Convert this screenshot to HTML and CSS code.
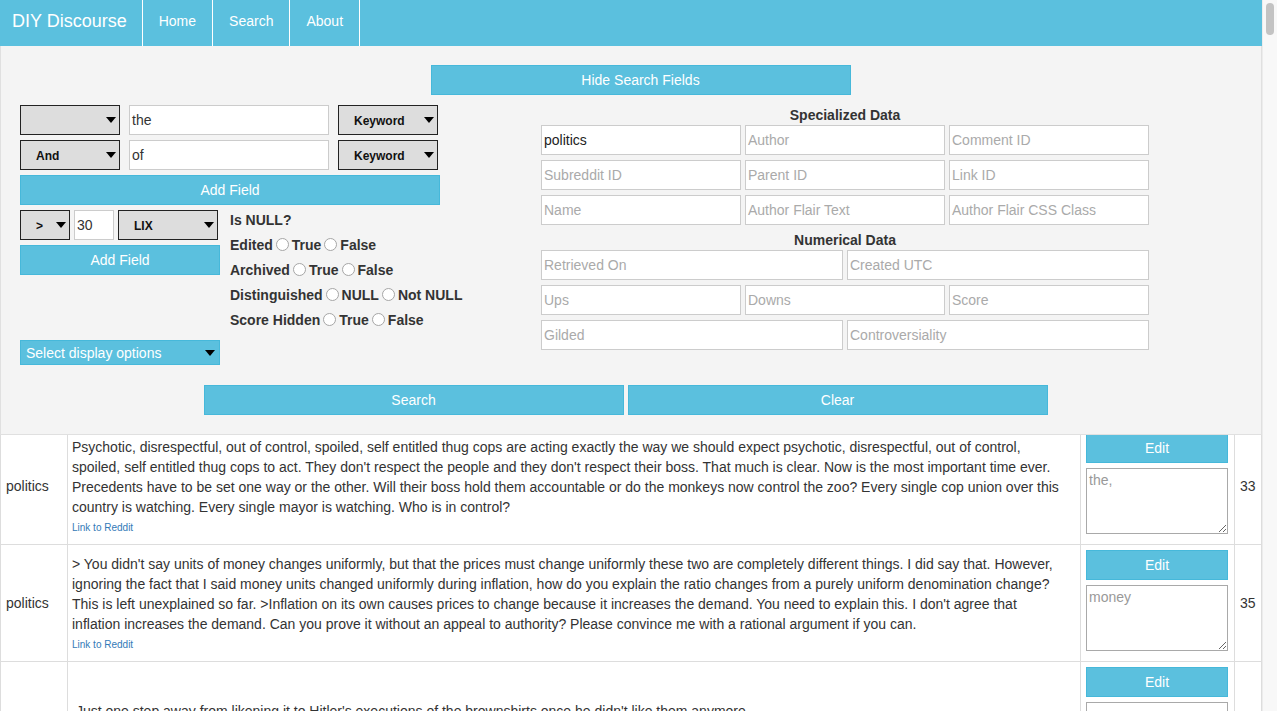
FILE: index.html
```html
<!DOCTYPE html>
<html lang="en">
<head>
<meta charset="utf-8">
<title>DIY Discourse</title>
<link rel="stylesheet" href="styles.css">
</head>
<body>
<div class="page">
  <nav class="navbar">
    <a class="brand" href="#">DIY Discourse</a>
    <a class="nav-link" href="#">Home</a>
    <a class="nav-link" href="#">Search</a>
    <a class="nav-link nav-last" href="#">About</a>
  </nav>

  <section class="panel">
    <div class="hide-row"><div class="btn btn-hide">Hide Search Fields</div></div>

    <div class="form">
      <div class="left">
        <div class="qrow">
          <div class="select sel-100"><span class="sel-text"></span><span class="arrow"></span></div>
          <div class="input input-200">the</div>
          <div class="select sel-100"><span class="sel-text">Keyword</span><span class="arrow"></span></div>
        </div>
        <div class="qrow">
          <div class="select sel-100"><span class="sel-text">And</span><span class="arrow"></span></div>
          <div class="input input-200">of</div>
          <div class="select sel-100"><span class="sel-text">Keyword</span><span class="arrow"></span></div>
        </div>
        <div class="btn btn-add-wide">Add Field</div>

        <div class="block2">
          <div class="numcol">
            <div class="numrow">
              <div class="select sel-50"><span class="sel-text">&gt;</span><span class="arrow"></span></div>
              <div class="input input-40">30</div>
              <div class="select sel-100"><span class="sel-text">LIX</span><span class="arrow"></span></div>
            </div>
            <div class="btn btn-add">Add Field</div>
          </div>
          <div class="isnull">
            <div class="isnull-title">Is NULL?</div>
            <div class="nrow">Edited<span class="radio"></span>True<span class="radio"></span>False</div>
            <div class="nrow">Archived<span class="radio"></span>True<span class="radio"></span>False</div>
            <div class="nrow">Distinguished<span class="radio"></span>NULL<span class="radio"></span>Not NULL</div>
            <div class="nrow">Score Hidden<span class="radio"></span>True<span class="radio"></span>False</div>
          </div>
        </div>

        <div class="display-select"><span>Select display options</span><span class="arrow"></span></div>
      </div>

      <div class="right">
        <div class="heading">Specialized Data</div>
        <div class="grow">
          <div class="input f3 filled">politics</div>
          <div class="input f3 ph">Author</div>
          <div class="input f3 ph">Comment ID</div>
        </div>
        <div class="grow">
          <div class="input f3 ph">Subreddit ID</div>
          <div class="input f3 ph">Parent ID</div>
          <div class="input f3 ph">Link ID</div>
        </div>
        <div class="grow">
          <div class="input f3 ph">Name</div>
          <div class="input f3 ph">Author Flair Text</div>
          <div class="input f3 ph">Author Flair CSS Class</div>
        </div>
        <div class="heading">Numerical Data</div>
        <div class="grow">
          <div class="input f2 ph">Retrieved On</div>
          <div class="input f2 ph">Created UTC</div>
        </div>
        <div class="grow">
          <div class="input f3 ph">Ups</div>
          <div class="input f3 ph">Downs</div>
          <div class="input f3 ph">Score</div>
        </div>
        <div class="grow">
          <div class="input f2 ph">Gilded</div>
          <div class="input f2 ph">Controversiality</div>
        </div>
      </div>
    </div>

    <div class="action-row">
      <div class="btn btn-action">Search</div>
      <div class="btn btn-action">Clear</div>
    </div>
  </section>

  <div class="results">
    <table>
      <colgroup>
        <col class="c-sub">
        <col class="c-body">
        <col class="c-edit">
        <col class="c-num">
      </colgroup>
      <tr>
        <td class="sub">politics</td>
        <td class="body">Psychotic, disrespectful, out of control, spoiled, self entitled thug cops are acting exactly the way we should expect psychotic, disrespectful, out of control,<br>spoiled, self entitled thug cops to act. They don't respect the people and they don't respect their boss. That much is clear. Now is the most important time ever.<br>Precedents have to be set one way or the other. Will their boss hold them accountable or do the monkeys now control the zoo? Every single cop union over this<br>country is watching. Every single mayor is watching. Who is in control?<a class="reddit" href="#">Link to Reddit</a></td>
        <td class="edit"><div class="btn btn-edit">Edit</div><textarea placeholder="the,"></textarea></td>
        <td class="num">33</td>
      </tr>
      <tr>
        <td class="sub">politics</td>
        <td class="body">&gt; You didn't say units of money changes uniformly, but that the prices must change uniformly these two are completely different things. I did say that. However,<br>ignoring the fact that I said money units changed uniformly during inflation, how do you explain the ratio changes from a purely uniform denomination change?<br>This is left unexplained so far. &gt;Inflation on its own causes prices to change because it increases the demand. You need to explain this. I don't agree that<br>inflation increases the demand. Can you prove it without an appeal to authority? Please convince me with a rational argument if you can.<a class="reddit" href="#">Link to Reddit</a></td>
        <td class="edit"><div class="btn btn-edit">Edit</div><textarea placeholder="money"></textarea></td>
        <td class="num">35</td>
      </tr>
      <tr>
        <td class="sub">politics</td>
        <td class="body">&nbsp;Just one step away from likening it to Hitler's executions of the brownshirts once he didn't like them anymore.<a class="reddit" href="#">Link to Reddit</a></td>
        <td class="edit"><div class="btn btn-edit">Edit</div><textarea placeholder=""></textarea></td>
        <td class="num">12</td>
      </tr>
    </table>
  </div>
</div>
<div class="scrollbar"><div class="thumb"></div></div>
</body>
</html>
```

FILE: styles.css
```css
* { box-sizing: border-box; }

html, body {
  margin: 0;
  height: 711px;
  overflow: hidden;
}

body {
  display: flex;
  font-family: "Liberation Sans", Arial, Helvetica, sans-serif;
  font-size: 14px;
  color: #333;
  background: #fff;
}

.page {
  flex: 1;
  min-width: 0;
  display: flex;
  flex-direction: column;
  overflow: hidden;
}

.scrollbar {
  width: 15px;
  flex: none;
  background: #f8f8f8;
  border-left: 1px solid #ececec;
  padding: 3px 0 0 3px;
}

.thumb {
  width: 8px;
  height: 32px;
  border-radius: 4px;
  background: #c3c3c3;
}

/* navbar */
.navbar {
  height: 46px;
  flex: none;
  display: flex;
  background: #5bc0de;
}

.brand {
  color: #fff;
  font-size: 18px;
  line-height: 42px;
  padding: 0 15px 0 12px;
  text-decoration: none;
}

.nav-link {
  color: #fff;
  font-size: 14px;
  line-height: 42px;
  padding: 0 16px;
  border-left: 1px solid #fff;
  text-decoration: none;
}

.nav-last { border-right: 1px solid #fff; }

/* panel */
.panel {
  flex: none;
  background: #f4f4f4;
  border: 1px solid #e0e0e0;
  border-top: 0;
  padding: 19px 0 19px 19px;
}

.btn {
  background: #5bc0de;
  border: 1px solid #46b8da;
  color: #fff;
  font-size: 14px;
  height: 30px;
  display: flex;
  align-items: center;
  justify-content: center;
}

.hide-row {
  display: flex;
  justify-content: center;
  margin-bottom: 10px;
}

.btn-hide { width: 420px; }

.form { display: flex; }

.left { width: 521px; }

.right { width: 608px; }

.qrow {
  display: flex;
  gap: 9px;
  margin-bottom: 5px;
}

.select {
  height: 30px;
  background: #ddd;
  border: 1px solid #222;
  display: flex;
  align-items: center;
  padding-left: 15px;
  padding-right: 3px;
  font-size: 12px;
  font-weight: bold;
  color: #111;
}

.sel-text { flex: 1; padding-top: 1px; }

.arrow {
  width: 0;
  height: 0;
  border-left: 5px solid transparent;
  border-right: 5px solid transparent;
  border-top: 6px solid #000;
}

.sel-100 { width: 100px; }
.sel-50 { width: 50px; }

.input {
  height: 30px;
  background: #fff;
  border: 1px solid #ccc;
  padding: 0 2px;
  display: flex;
  align-items: center;
  font-size: 14px;
  color: #333;
  white-space: nowrap;
  overflow: hidden;
}

.input-200 { width: 200px; }
.input-40 { width: 40px; }

.btn-add-wide {
  width: 420px;
  margin-bottom: 5px;
}

.block2 { display: flex; }

.numcol { width: 200px; }

.numrow {
  display: flex;
  gap: 4px;
  margin-bottom: 5px;
}

.btn-add { width: 200px; }

.isnull {
  margin-left: 10px;
  font-weight: bold;
  color: #333;
}

.isnull-title {
  line-height: 20px;
  height: 22px;
}

.nrow {
  height: 25px;
  display: flex;
  align-items: center;
}

.radio {
  width: 13px;
  height: 13px;
  border: 1px solid #a6a6a6;
  border-radius: 50%;
  background: #fff;
  margin: 0 3px 0 3px;
}

.display-select {
  width: 200px;
  height: 25px;
  margin-top: 8px;
  background: #5bc0de;
  border: 1px solid #46b8da;
  color: #fff;
  display: flex;
  align-items: center;
  justify-content: space-between;
  padding: 0 4px 0 5px;
}

.heading {
  height: 20px;
  line-height: 20px;
  text-align: center;
  font-weight: bold;
  color: #333;
}

.grow {
  display: flex;
  justify-content: space-between;
  margin-bottom: 5px;
}

.f3 { width: 200px; }
.f2 { width: 302px; }

.ph { color: #aaa; }
.filled { color: #222; }

.action-row {
  display: flex;
  justify-content: center;
  gap: 4px;
  padding-right: 30px;
  margin-top: 20px;
}

.btn-action { width: 420px; }

/* results */
.results {
  flex: 1;
  overflow: hidden;
}

table {
  width: 100%;
  border-collapse: collapse;
  table-layout: fixed;
  margin-top: -8px;
}

.c-sub { width: 67px; }
.c-edit { width: 154px; }
.c-num { width: 27px; }

td {
  border: 1px solid #ddd;
  padding: 5px;
  vertical-align: middle;
  line-height: 20px;
  color: #333;
}

.sub { padding-left: 5px; }

.body { padding: 5px 4px; }

.reddit {
  display: block;
  font-size: 10px;
  line-height: 14px;
  margin-top: 4px;
  color: #337ab7;
  text-decoration: none;
}

.edit {
  vertical-align: top;
  padding: 5px 5px 10px 5px;
}

.btn-edit { width: 142px; }

textarea {
  display: block;
  width: 142px;
  height: 66px;
  margin-top: 5px;
  border: 1px solid #a9a9a9;
  padding: 3px 2px;
  font-family: "Liberation Sans", Arial, Helvetica, sans-serif;
  font-size: 14px;
  background: #fff;
}

textarea::placeholder { color: #999; }

.num { padding-left: 5px; }
```
